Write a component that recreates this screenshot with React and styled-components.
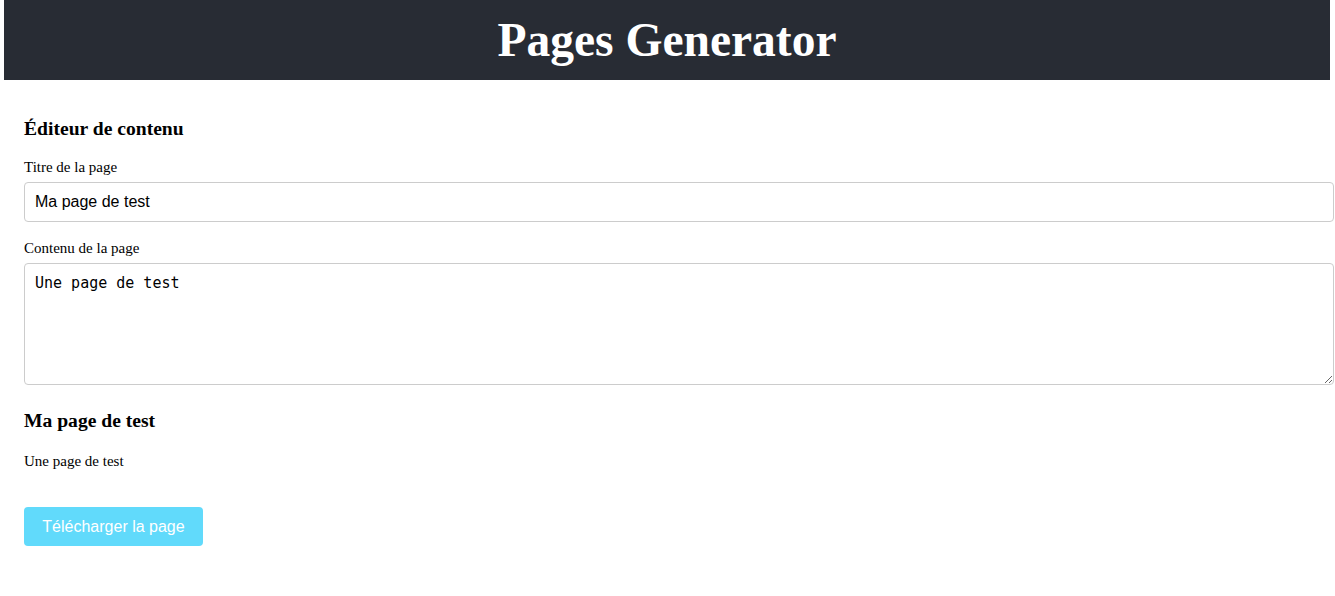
import React, { useState } from 'react';
import styled, { createGlobalStyle } from 'styled-components';

const GlobalStyle = createGlobalStyle`
  body {
    margin: 0;
    background: #ffffff;
    font-family: "Liberation Serif", "Times New Roman", serif;
    color: #000000;
  }
`;

const Header = styled.header`
  background-color: #282c34;
  margin: 0 5px 0 4px;
  height: 80px;
  display: flex;
  align-items: center;
  justify-content: center;
`;

const Title = styled.h1`
  margin: 0;
  color: #ffffff;
  font-size: 47.5px;
  font-weight: bold;
  font-family: "Liberation Serif", "Times New Roman", serif;
`;

const Main = styled.main`
  padding: 38px 0 0 24px;
  display: flex;
  flex-direction: column;
`;

const SectionTitle = styled.h3`
  margin: 0;
  font-size: 19.6px;
  line-height: 22px;
  font-weight: bold;
`;

const Label = styled.label`
  display: block;
  font-size: 15px;
  line-height: 16px;
  margin: ${(p) => p.$top}px 0 7px;
`;

const TextInput = styled.input`
  box-sizing: border-box;
  width: calc(100% - 1px);
  height: 40px;
  margin: 0;
  padding: 0 10px;
  border: 1px solid #cccccc;
  border-radius: 4px;
  font-family: "Liberation Sans", Arial, sans-serif;
  font-size: 16px;
  color: #000000;
  outline: none;
`;

const TextArea = styled.textarea`
  box-sizing: border-box;
  display: block;
  width: calc(100% - 1px);
  height: 122px;
  margin: 0;
  padding: 10px 10px;
  border: 1px solid #cccccc;
  border-radius: 4px;
  font-family: "DejaVu Sans Mono", "Liberation Mono", monospace;
  font-size: 15px;
  line-height: 18px;
  color: #000000;
  outline: none;
`;

const Preview = styled.section`
  margin-top: 25px;
`;

const PreviewText = styled.p`
  margin: 21px 0 0;
  font-size: 15px;
  line-height: 16px;
`;

const DownloadButton = styled.button`
  margin-top: 38px;
  align-self: flex-start;
  width: 179px;
  height: 39px;
  border: none;
  border-radius: 4px;
  background-color: #61dafb;
  color: #ffffff;
  font-family: "Liberation Sans", Arial, sans-serif;
  font-size: 16px;
  cursor: pointer;
`;

export default function App() {
  const [title, setTitle] = useState('Ma page de test');
  const [content, setContent] = useState('Une page de test');

  return (
    <>
      <GlobalStyle />
      <Header>
        <Title>Pages Generator</Title>
      </Header>
      <Main>
        <SectionTitle>Éditeur de contenu</SectionTitle>
        <Label $top={19} htmlFor="title">Titre de la page</Label>
        <TextInput id="title" value={title} onChange={(e) => setTitle(e.target.value)} />
        <Label $top={18} htmlFor="content">Contenu de la page</Label>
        <TextArea id="content" value={content} onChange={(e) => setContent(e.target.value)} />
        <Preview>
          <SectionTitle>{title}</SectionTitle>
          <PreviewText>{content}</PreviewText>
        </Preview>
        <DownloadButton>Télécharger la page</DownloadButton>
      </Main>
    </>
  );
}
